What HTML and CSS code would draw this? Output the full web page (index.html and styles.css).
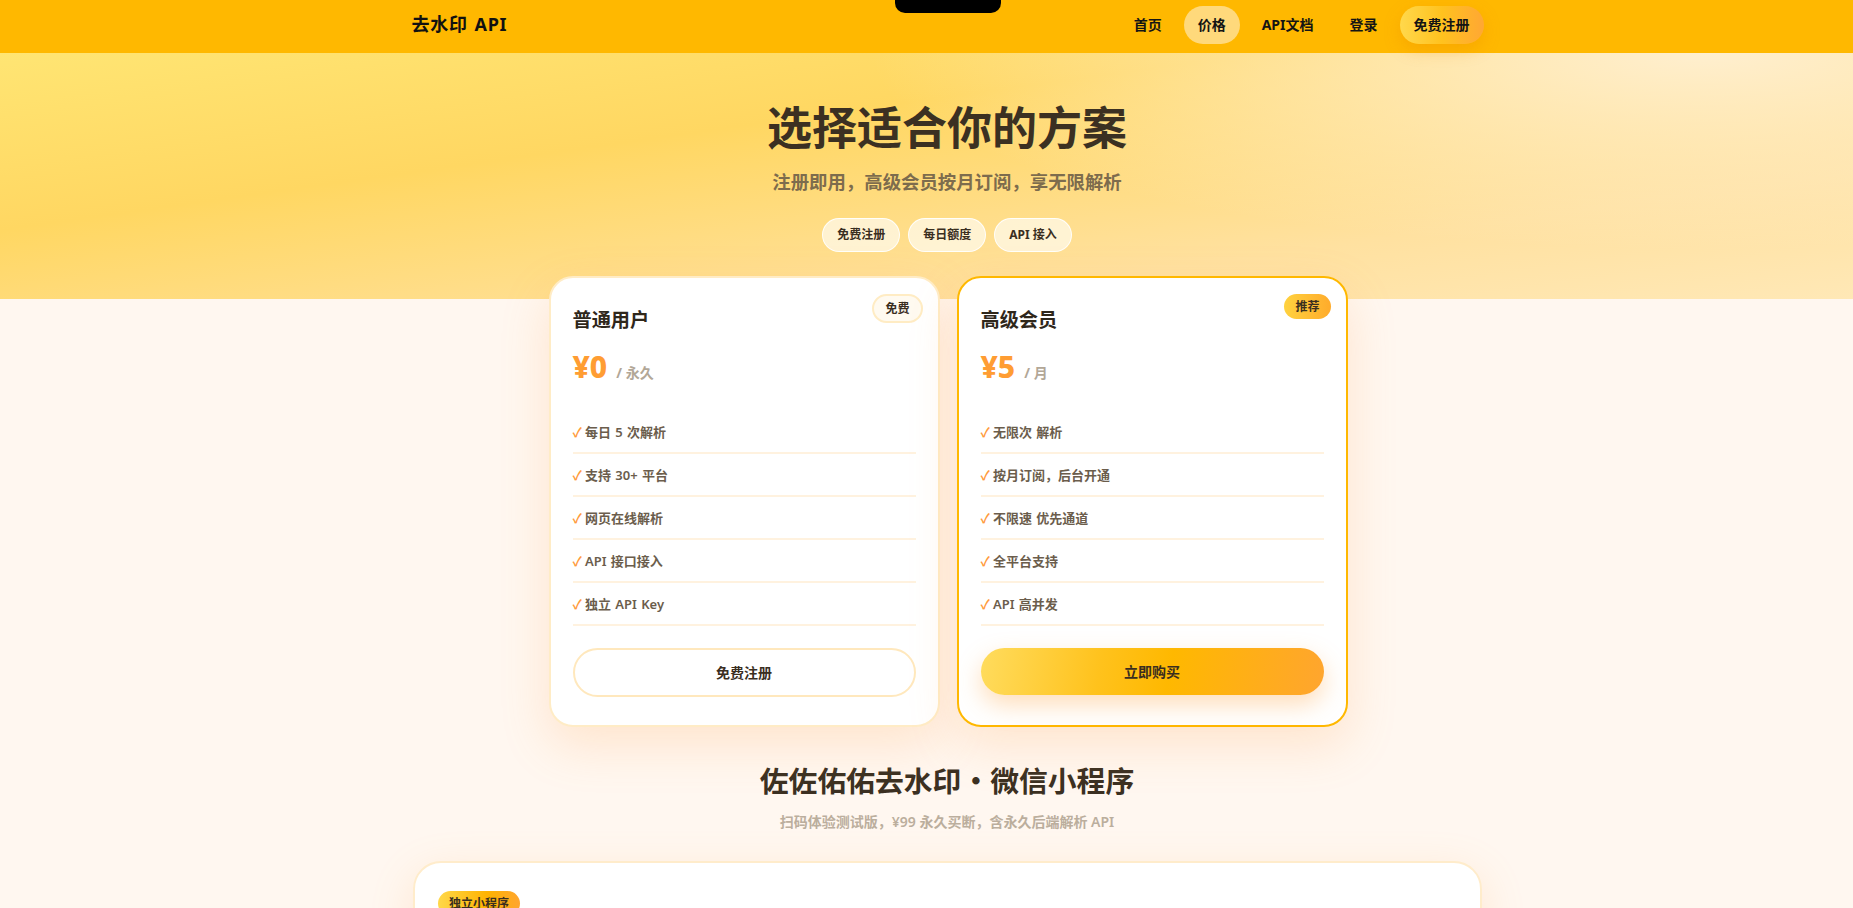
FILE: index.html
```html
<!DOCTYPE html>
<html lang="zh-CN">
<head>
<meta charset="utf-8">
<title>价格 - 去水印 API</title>
<link rel="stylesheet" href="styles.css">
</head>
<body>
<header class="header">
  <div class="notch"></div>
  <div class="header-inner">
    <div class="logo">去水印 API</div>
    <nav class="nav">
      <a href="#">首页</a>
      <a href="#" class="active">价格</a>
      <a href="#">API文档</a>
      <a href="#">登录</a>
      <a href="#" class="cta">免费注册</a>
    </nav>
  </div>
</header>

<section class="hero">
  <div class="hero-inner">
    <h1 class="hero-title">选择适合你的方案</h1>
    <p class="hero-sub">注册即用，高级会员按月订阅，享无限解析</p>
    <div class="chips">
      <span class="chip">免费注册</span>
      <span class="chip">每日额度</span>
      <span class="chip">API 接入</span>
    </div>
  </div>
</section>

<section class="plans">
  <div class="card">
    <span class="badge">免费</span>
    <h3 class="card-title">普通用户</h3>
    <div class="price"><span class="amount">¥0</span><span class="unit">/ 永久</span></div>
    <ul class="features">
      <li><span class="check">✓</span>每日 5 次解析</li>
      <li><span class="check">✓</span>支持 30+ 平台</li>
      <li><span class="check">✓</span>网页在线解析</li>
      <li><span class="check">✓</span>API 接口接入</li>
      <li><span class="check">✓</span>独立 API Key</li>
    </ul>
    <a href="#" class="btn">免费注册</a>
  </div>
  <div class="card pro">
    <span class="badge hot">推荐</span>
    <h3 class="card-title">高级会员</h3>
    <div class="price"><span class="amount">¥5</span><span class="unit">/ 月</span></div>
    <ul class="features">
      <li><span class="check">✓</span>无限次 解析</li>
      <li><span class="check">✓</span>按月订阅，后台开通</li>
      <li><span class="check">✓</span>不限速 优先通道</li>
      <li><span class="check">✓</span>全平台支持</li>
      <li><span class="check">✓</span>API 高并发</li>
    </ul>
    <a href="#" class="btn primary">立即购买</a>
  </div>
</section>

<section class="mini">
  <div class="mini-head">
    <h2 class="mini-title">佐佐佑佑去水印・微信小程序</h2>
    <p class="mini-sub">扫码体验测试版，¥99 永久买断，含永久后端解析 API</p>
  </div>
  <div class="mini-card">
    <span class="tag">独立小程序</span>
    <h3 class="mini-card-title">佐佐佑佑去水印</h3>
    <p class="mini-card-text">微信扫码即可体验测试版，一次买断永久使用。</p>
  </div>
</section>
</body>
</html>
```

FILE: styles.css
```css
html, body {
  margin: 0;
  padding: 0;
}
body {
  background: #fff7f0;
  font-family: "Noto Sans", "Noto Sans CJK SC", sans-serif;
  color: #3b3021;
  overflow-x: hidden;
}
a { text-decoration: none; color: inherit; }

/* header */
.header {
  background: #ffb800;
  position: relative;
}
.notch {
  position: absolute;
  top: 0;
  left: calc(50% - 31.5px);
  width: 106px;
  height: 13px;
  background: #000;
  border-radius: 0 0 10px 10px;
}
.header-inner {
  width: 1072px;
  margin-left: calc(50% - 515px);
  display: flex;
  align-items: center;
  justify-content: space-between;
  padding: 6px 0 9px;
}
.logo {
  font-size: 18px;
  font-weight: 700;
  color: #111;
  line-height: 24px;
  letter-spacing: 0.8px;
  word-spacing: 1px;
  margin-bottom: 3px;
}
.nav {
  display: flex;
  align-items: center;
  gap: 8px;
}
.nav a {
  padding: 10px 14px;
  line-height: 18px;
  font-size: 14px;
  font-weight: 700;
  color: #141414;
  border-radius: 999px;
}
.nav a.active {
  background: #ffd97b;
}
.nav a.cta {
  background: linear-gradient(90deg, #ffd84c 0%, #ffc21e 50%, #ffa734 100%);
  box-shadow: 0 6px 16px rgba(235, 140, 0, 0.35);
}

/* hero */
.hero {
  background:
    radial-gradient(ellipse 45% 80% at 92% 0%, rgba(255, 240, 212, 0.95), rgba(255, 240, 212, 0) 100%),
    linear-gradient(172deg, #ffe573 0%, #ffd762 35%, #ffe1a0 75%, #ffe8b6 100%);
  padding: 48px 0 47px;
}
.hero-inner {
  width: 1000px;
  margin-left: calc(50% - 479.5px);
  text-align: center;
}
.hero-title {
  margin: 0;
  font-size: 45px;
  line-height: 54px;
  font-weight: 700;
  color: #3b3022;
}
.hero-sub {
  margin: 13px 0 0;
  font-size: 18.4px;
  line-height: 27.6px;
  font-weight: 700;
  color: #7d6c4d;
}
.chips {
  margin-top: 22px;
  display: flex;
  justify-content: center;
  gap: 8px;
}
.chip {
  padding: 7px 14px;
  line-height: 18px;
  font-size: 12px;
  font-weight: 700;
  color: #3a2e1f;
  background: rgba(255, 248, 228, 0.8);
  border: 1px solid rgba(255, 255, 255, 0.9);
  border-radius: 999px;
}

/* plans */
.plans {
  position: relative;
  display: grid;
  grid-template-columns: 391px 391px;
  gap: 17px;
  width: 799px;
  margin: -23px 0 0 calc(50% - 378px);
}
.card {
  position: relative;
  background: #fff;
  border: 2px solid #ffecc6;
  border-radius: 24px;
  padding: 28px 22px 28px;
  box-shadow: 0 18px 48px rgba(255, 165, 80, 0.22);
}
.card.pro {
  border-color: #ffb800;
}
.badge {
  position: absolute;
  top: 16px;
  right: 15px;
  padding: 4px 11px;
  line-height: 17px;
  font-size: 12px;
  font-weight: 700;
  color: #3a2e1f;
  background: #fffaf0;
  border: 2px solid #ffecc4;
  border-radius: 999px;
}
.badge.hot {
  border: none;
  background: linear-gradient(90deg, #ffd23f, #ffab2b);
}
.card-title {
  margin: 0;
  font-size: 19.2px;
  line-height: 27px;
  font-weight: 700;
  color: #2f271b;
}
.price {
  margin-top: 15px;
  display: flex;
  align-items: baseline;
}
.amount {
  font-size: 30px;
  line-height: 38px;
  font-weight: 800;
  color: #ff9d33;
}
.unit {
  margin-left: 9px;
  font-size: 14px;
  font-weight: 700;
  color: #b2a797;
}
.features {
  list-style: none;
  margin: 25px 0 0;
  padding: 0;
}
.features li {
  padding: 12px 0 10px;
  line-height: 19px;
  font-size: 13px;
  font-weight: 600;
  color: #6b5d4c;
  word-spacing: 1px;
  border-bottom: 2px solid #fff2df;
}
.check {
  color: #ff9a3c;
  font-weight: 700;
  margin-right: 3px;
}
.btn {
  display: block;
  margin-top: 22px;
  padding: 13px;
  text-align: center;
  font-size: 14px;
  line-height: 19px;
  font-weight: 700;
  color: #3a2e1f;
  background: #fff;
  border: 2px solid #ffe8bd;
  border-radius: 999px;
}
.btn.primary {
  padding: 14px;
  border: none;
  background: linear-gradient(100deg, #ffdc5e 0%, #ffc21c 35%, #ffb800 55%, #ffa52f 100%);
  box-shadow: 0 10px 24px rgba(255, 160, 60, 0.35);
}

/* mini program */
.mini {
  margin-top: 35px;
  padding-bottom: 60px;
}
.mini-head {
  width: 1000px;
  margin-left: calc(50% - 479.5px);
  text-align: center;
}
.mini-title {
  margin: 0;
  font-size: 28.8px;
  line-height: 37px;
  font-weight: 700;
  color: #3b3022;
}
.mini-sub {
  margin: 12px 0 0;
  font-size: 14px;
  line-height: 21px;
  font-weight: 600;
  color: #bbae9d;
}
.mini-card {
  width: 1069px;
  box-sizing: border-box;
  margin: 29px 0 0 calc(50% - 513.5px);
  padding: 28px 23px;
  background: #fff;
  border: 2px solid #ffeccb;
  border-radius: 28px;
  box-shadow: 0 12px 44px rgba(255, 170, 90, 0.2);
}
.tag {
  display: inline-block;
  padding: 4px 11px;
  line-height: 17px;
  font-size: 12px;
  font-weight: 700;
  color: #3a2e1f;
  border-radius: 999px;
  background: linear-gradient(90deg, #ffd84a, #ffb300 60%, #ffa52e);
}
.mini-card-title {
  margin: 16px 0 0;
  font-size: 22px;
  color: #2f271b;
}
.mini-card-text {
  margin: 8px 0 0;
  font-size: 14px;
  color: #6e5e4a;
}
```
